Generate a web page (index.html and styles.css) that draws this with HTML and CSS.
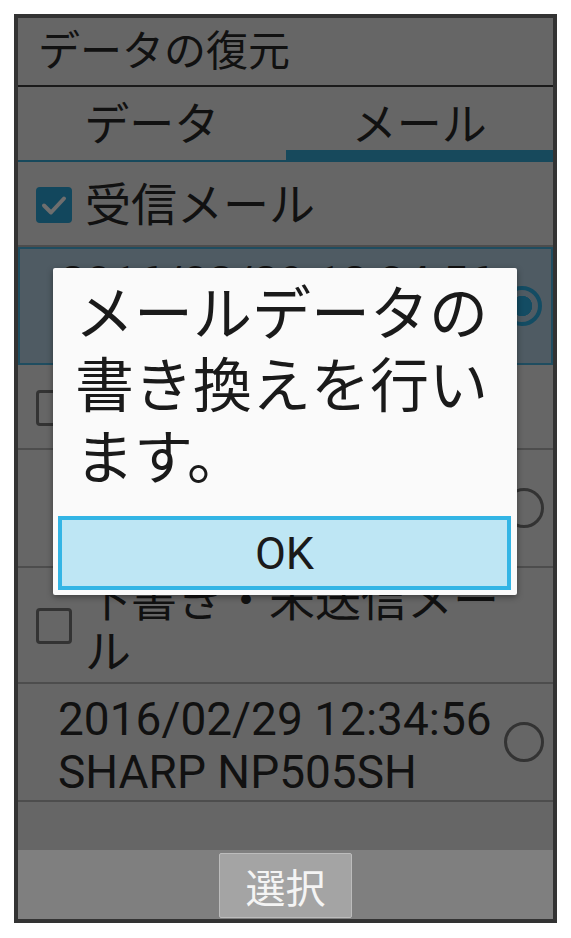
FILE: index.html
```html
<!DOCTYPE html>
<html>
  <head>
    <title>データの復元</title>
    <link rel="stylesheet" href="styles.css">
  </head>
  <body>
    <div class="phone">
      <div class="title">データの復元</div>
      <div class="tabs">
        <div class="tab">データ</div>
        <div class="tab active">メール</div>
      </div>
      <div class="list">
        <div class="row check-row">
          <span class="checkbox checked">
            <svg viewBox="0 0 36 36" width="36" height="36"><polyline points="8,18.5 15,25.5 28,11.5" fill="none" stroke="#6e6e6e" stroke-width="4" stroke-linecap="round" stroke-linejoin="round"/></svg>
          </span>
          <span class="label">受信メール</span>
        </div>
        <div class="row mail-row selected">
          <div class="mail-text">
            <div>2016/02/29 12:34:56</div>
            <div>SHARP NP505SH</div>
          </div>
          <span class="radio on"></span>
        </div>
        <div class="row check-row">
          <span class="checkbox"></span>
          <span class="label">送信メール</span>
        </div>
        <div class="row mail-row">
          <div class="mail-text">
            <div>2016/02/29 12:34:56</div>
            <div>SHARP NP505SH</div>
          </div>
          <span class="radio"></span>
        </div>
        <div class="row check-row">
          <span class="checkbox"></span>
          <span class="label">下書き・未送信メール</span>
        </div>
        <div class="row mail-row">
          <div class="mail-text">
            <div>2016/02/29 12:34:56</div>
            <div>SHARP NP505SH</div>
          </div>
          <span class="radio"></span>
        </div>
      </div>
      <div class="spacer"></div>
      <div class="softkeys">
        <button class="softkey">選択</button>
      </div>

      <div class="dialog">
        <div class="message">メールデータの書き換えを行います。</div>
        <button class="ok-button">OK</button>
      </div>
    </div>
  </body>
</html>
```

FILE: styles.css
```css
* {
  box-sizing: border-box;
}
body {
  margin: 0;
  padding: 14px;
  background: #fff;
  font-family: Roboto, "Noto Sans CJK JP", sans-serif;
  color: #111;
}
.phone {
  position: relative;
  width: 543px;
  height: 909px;
  border: 4px solid #333;
  background: #666;
  display: flex;
  flex-direction: column;
}
.title {
  height: 69px;
  padding-left: 20px;
  font-size: 42px;
  line-height: 67px;
  border-bottom: 2px solid #1a1a1a;
}
.tabs {
  display: flex;
  height: 75px;
  border-bottom: 2px solid #17495c;
}
.tab {
  flex: 1;
  text-align: center;
  font-size: 45px;
  line-height: 78px;
}
.tab.active {
  box-shadow: inset 0 -10px 0 #17495c;
}
.row {
  display: flex;
  align-items: center;
  border-bottom: 2px solid #4d4d4d;
}
.check-row {
  min-height: 85px;
  padding: 6px 40px 4px 18px;
}
.check-row .label {
  margin-left: 13px;
  font-size: 46px;
  line-height: 52px;
}
.checkbox {
  flex: none;
  width: 36px;
  height: 36px;
  border: 3.5px solid #333;
  border-radius: 4px;
}
.checkbox.checked {
  border: none;
  background: #12475d;
}
.checkbox svg {
  display: block;
}
.mail-row {
  min-height: 118px;
  padding: 8px 9px 0 40px;
}
.mail-row.selected {
  background: #4f5b63;
  border: 2px solid #1f4d60;
  min-height: 117px;
}
.mail-text {
  flex: 1;
  font-size: 46px;
  line-height: 53px;
}
.radio {
  flex: none;
  width: 40px;
  height: 40px;
  margin-top: -8px;
  border: 3px solid #333;
  border-radius: 50%;
}
.radio.on {
  border: 4px solid #134c63;
  background: radial-gradient(circle, #134c63 0 10px, transparent 10.5px);
}
.spacer {
  flex: 1;
}
.softkeys {
  height: 69px;
  background: #7f7f7f;
  display: flex;
  justify-content: center;
  padding-top: 3px;
}
.softkey {
  width: 133px;
  height: 65px;
  background: #a4a4a4;
  border: 1px solid #bcbcbc;
  border-radius: 2px;
  color: #f4f4f4;
  font-family: Roboto, "Noto Sans CJK JP", sans-serif;
  font-size: 40px;
  padding: 0;
}
.dialog {
  position: absolute;
  left: 35px;
  top: 250px;
  width: 464px;
  background: #fafafa;
  border-radius: 2px;
  box-shadow: 0 2px 6px rgba(0, 0, 0, 0.4);
  padding: 11px 6px 5px 5px;
}
.message {
  padding: 0 10px 0 17px;
  font-size: 59px;
  line-height: 72px;
  color: #1a1a1a;
  margin-bottom: 21px;
}
.ok-button {
  display: block;
  width: 100%;
  height: 74px;
  background: #bee6f4;
  border: 4px solid #33b5e5;
  font-family: Roboto, "Noto Sans CJK JP", sans-serif;
  font-size: 45px;
  color: #1a1a1a;
  padding: 0;
}
```
